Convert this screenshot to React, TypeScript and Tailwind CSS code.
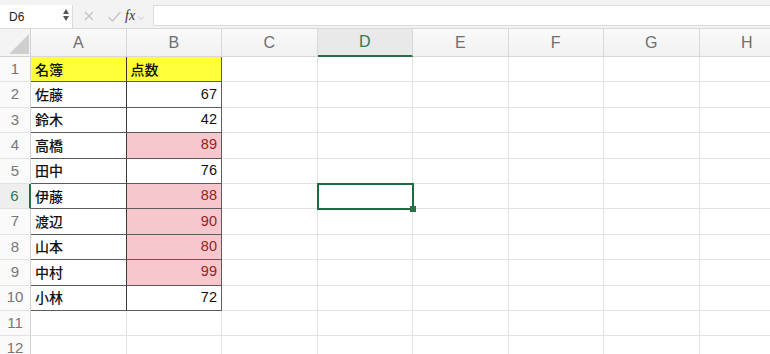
import React from 'react';

const COLS = ['A', 'B', 'C', 'D', 'E', 'F', 'G', 'H'];

const DATA: [string, string | number][] = [
  ['名簿', '点数'],
  ['佐藤', 67],
  ['鈴木', 42],
  ['高橋', 89],
  ['田中', 76],
  ['伊藤', 88],
  ['渡辺', 90],
  ['山本', 80],
  ['中村', 99],
  ['小林', 72],
];

const jp = "font-['Noto_Sans_CJK_JP','Noto_Sans',sans-serif]";
const sans = "font-['Liberation_Sans',Arial,sans-serif]";

const TopBar = () => (
  <div className="h-[29px] bg-[#f3f3f3] flex items-start pt-[5px] border-b border-[#d9d9d9]">
    <div className="w-[73px] h-[23px] bg-white border-r border-[#dcdcdc] flex items-center pl-[9px] relative">
      <span className={`${sans} text-[12px] text-[#222]`}>D6</span>
      <div className="absolute right-[3px] top-[4px] flex flex-col items-center gap-[2px]">
        <div className="w-0 h-0 border-l-[3px] border-r-[3px] border-b-[5px] border-l-transparent border-r-transparent border-b-[#555]" />
        <div className="w-0 h-0 border-l-[3px] border-r-[3px] border-t-[5px] border-l-transparent border-r-transparent border-t-[#555]" />
      </div>
    </div>
    <div className="w-[80px] h-[22px] flex items-center">
      <svg width="12" height="12" viewBox="0 0 12 12" className="ml-[10px]">
        <path d="M2 2 L10 10 M10 2 L2 10" stroke="#c4c4c4" strokeWidth="1.3" />
      </svg>
      <svg width="15" height="13" viewBox="0 0 15 13" className="ml-[12px]">
        <path d="M1.5 7 L5.5 11 L13.5 2" stroke="#c4c4c4" strokeWidth="1.3" fill="none" />
      </svg>
      <span className="ml-[3px] font-['Liberation_Serif',serif] italic text-[14px] text-[#333] leading-none">fx</span>
      <svg width="8" height="6" viewBox="0 0 8 6" className="ml-[2px] mt-[3px]">
        <path d="M1 1.5 L4 4.5 L7 1.5" stroke="#c4c4c4" strokeWidth="1" fill="none" />
      </svg>
    </div>
    <div className="flex-1 h-[21px] bg-white border-t border-b border-l border-[#dcdcdc]" />
  </div>
);

const Corner = () => (
  <div className="bg-[#f4f4f4] border-r border-b border-[#d2d2d2] flex items-end justify-end pr-[1px] pb-[2px] overflow-hidden">
    <svg width="20" height="20" viewBox="0 0 20 20" className="block shrink-0">
      <polygon points="20,0 20,20 0,20" fill="#cfcfcf" />
    </svg>
  </div>
);

const App = () => {
  const rowCount = 12;
  return (
    <div className="w-[770px] h-[354px] overflow-hidden bg-white">
      <TopBar />
      <div className="grid grid-cols-[31px_repeat(8,95.5px)] grid-rows-[28px_repeat(12,25.4px)]">
        <Corner />
        {COLS.map((c) => (
          <div
            key={c}
            className={`flex items-center justify-center ${sans} text-[16px] ${
              c === 'D'
                ? 'bg-[#e9e9e9] text-[#2f7a4d] border-b-2 border-b-[#2a6e45] border-r border-r-[#d8d8d8]'
                : 'bg-gradient-to-b from-[#fafafa] to-[#f1f1f1] text-[#6f6f6f] border-r border-b border-[#d8d8d8]'
            }`}
          >
            {c}
          </div>
        ))}
        {Array.from({ length: rowCount }, (_, i) => {
          const r = i + 1;
          const sel = r === 6;
          const d = DATA[i];
          const inData = !!d;
          const hot = inData && typeof d[1] === 'number' && (d[1] as number) >= 80;
          return (
            <React.Fragment key={r}>
              <div
                className={`flex items-center justify-center ${sans} text-[15px] border-b border-[#e2e2e2] ${
                  sel
                    ? 'bg-[#eeeeee] text-[#2f7a4d] border-r-2 border-r-[#2a6e45]'
                    : 'bg-[#fafafa] text-[#777] border-r border-r-[#d2d2d2]'
                }`}
              >
                {r}
              </div>
              <div
                className={`flex items-center pl-[4px] ${jp} font-medium text-[14px] text-[#111] border-r ${
                  inData ? 'border-r-[#3a3a3a]' : 'border-r-[#e2e2e2]'
                } border-b ${inData ? 'border-b-[#5c5c5c]' : 'border-b-[#e2e2e2]'} ${
                  r === 1 ? 'bg-[#ffff3a]' : ''
                }`}
              >
                {d ? d[0] : ''}
              </div>
              <div
                className={`flex items-center border-r ${inData ? 'border-r-[#5c5c5c]' : 'border-r-[#e2e2e2]'} border-b ${
                  inData ? 'border-b-[#5c5c5c]' : 'border-b-[#e2e2e2]'
                } ${r === 1 ? `bg-[#ffff3a] pl-[4px] ${jp} font-medium text-[14px] text-[#111]` : `justify-end pr-[4px] ${sans} text-[14.5px]`} ${
                  hot ? 'bg-[#f6c8cd] text-[#9c1c22]' : r === 1 ? '' : 'text-[#111]'
                }`}
              >
                {d ? d[1] : ''}
              </div>
              {COLS.slice(2).map((c) => (
                <div key={c} className="border-r border-b border-[#e2e2e2] relative">
                  {c === 'D' && sel && (
                    <div className="absolute z-10 -top-px -left-px -right-[2px] -bottom-[2px] border-2 border-[#1f6b40]">
                      <div className="absolute -right-[4px] -bottom-[4px] w-[6px] h-[6px] bg-[#2a7048]" />
                    </div>
                  )}
                </div>
              ))}
            </React.Fragment>
          );
        })}
      </div>
    </div>
  );
};

export default App;
